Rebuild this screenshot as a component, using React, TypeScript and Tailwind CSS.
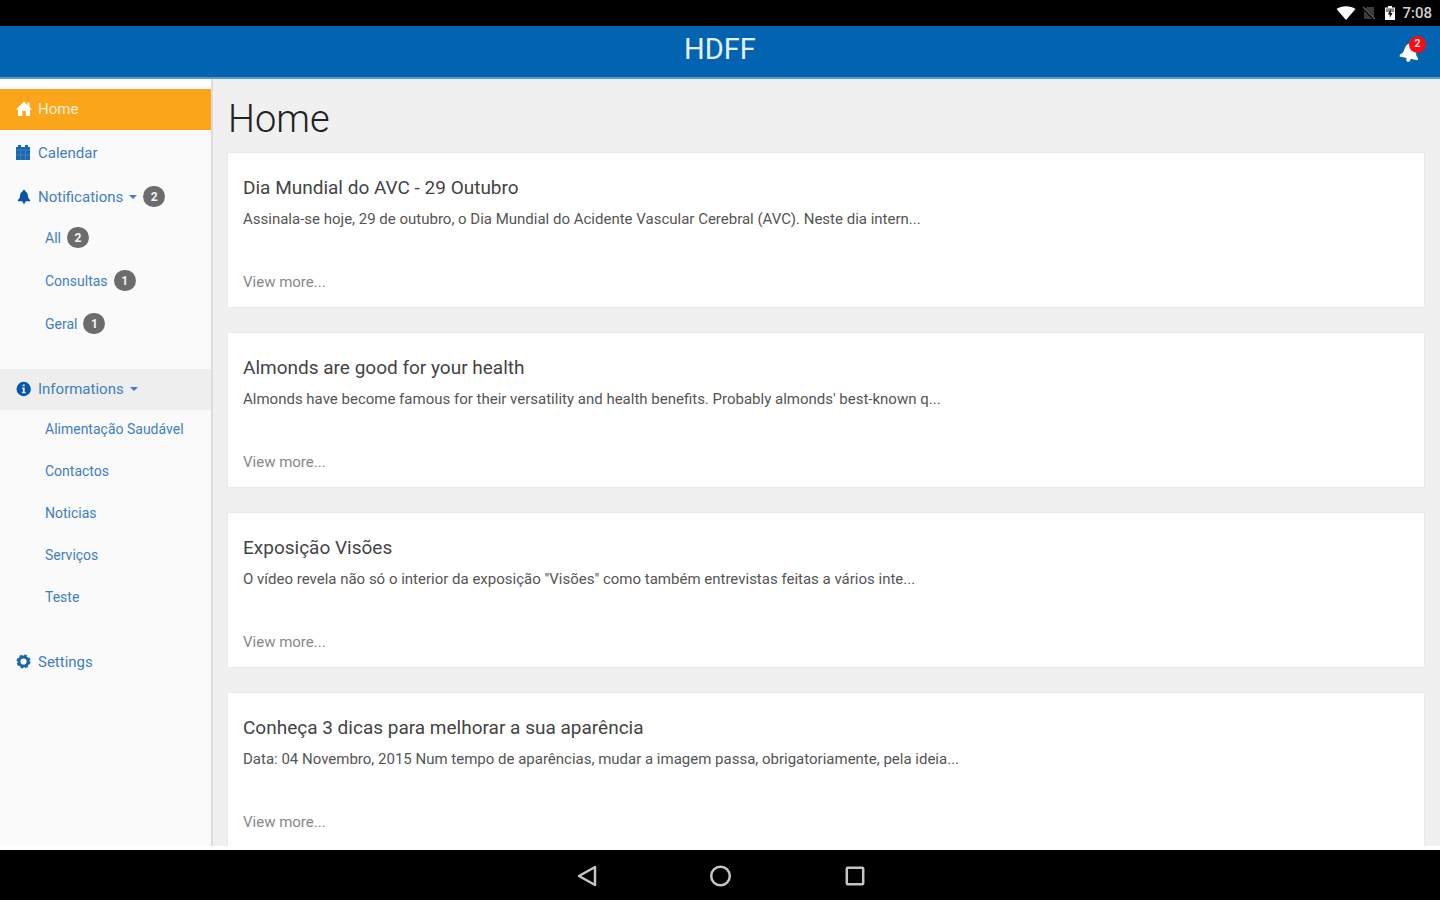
import React, { useState } from 'react';
import clsx from 'clsx';

interface SubItem {
  label: string;
  count?: number;
}

interface Article {
  title: string;
  excerpt: string;
}

const notificationItems: SubItem[] = [
  { label: 'All', count: 2 },
  { label: 'Consultas', count: 1 },
  { label: 'Geral', count: 1 },
];

const informationItems: SubItem[] = [
  { label: 'Alimentação Saudável' },
  { label: 'Contactos' },
  { label: 'Noticias' },
  { label: 'Serviços' },
  { label: 'Teste' },
];

const articles: Article[] = [
  {
    title: 'Dia Mundial do AVC - 29 Outubro',
    excerpt:
      'Assinala-se hoje, 29 de outubro, o Dia Mundial do Acidente Vascular Cerebral (AVC). Neste dia intern...',
  },
  {
    title: 'Almonds are good for your health',
    excerpt:
      "Almonds have become famous for their versatility and health benefits. Probably almonds' best-known q...",
  },
  {
    title: 'Exposição Visões',
    excerpt:
      'O vídeo revela não só o interior da exposição "Visões" como também entrevistas feitas a vários inte...',
  },
  {
    title: 'Conheça 3 dicas para melhorar a sua aparência',
    excerpt:
      'Data: 04 Novembro, 2015 Num tempo de aparências, mudar a imagem passa, obrigatoriamente, pela ideia...',
  },
];

function HomeIcon() {
  return (
    <svg viewBox="0 0 16 16" className="size-4 shrink-0" fill="currentColor" aria-hidden="true">
      <path d="M8 0.5 L16 8.5 H14 V15 H9.8 V10 H6.4 V15 H2 V8.5 H0 Z" />
      <path d="M11.5 1.5 H13.5 V6 H11.5 Z" />
    </svg>
  );
}

function CalendarIcon() {
  return (
    <svg viewBox="0 0 16 16" className="size-4 shrink-0" aria-hidden="true">
      <path d="M0 2 H14 V15 H0 Z" fill="#1b68b0" />
      <path d="M2 0 H5 V3 H2 Z M9 0 H12 V3 H9 Z" fill="#1b68b0" />
      <path d="M0 5 H14 M0 10 H14 M4.7 5 V15 M9.4 5 V15" stroke="#4d8cc4" strokeWidth="0.7" />
    </svg>
  );
}

function BellIcon({ className }: { className?: string }) {
  return (
    <svg viewBox="0 0 16 16" className={className} fill="currentColor" aria-hidden="true">
      <path d="M8 1 C9 1 9.4 1.7 9.4 2.5 C11.3 3.2 11.8 5 12 7 C12.2 9.2 13 10.2 14.2 11 V12.3 H1.8 V11 C3 10.2 3.8 9.2 4 7 C4.2 5 4.7 3.2 6.6 2.5 C6.6 1.7 7 1 8 1 Z" />
      <path d="M6.5 12 H9.5 C9.5 14 9 14.6 8 14.6 C7 14.6 6.5 14 6.5 12 Z" />
    </svg>
  );
}

function InfoIcon() {
  return (
    <svg viewBox="0 0 16 16" className="size-4 shrink-0" aria-hidden="true">
      <circle cx="7.7" cy="8" r="7.2" fill="#0b55a5" />
      <path d="M6.7 3.5 H8.7 V5.3 H6.7 Z M5.9 6.6 H8.7 V11 H9.7 V12.2 H5.9 V11 H6.8 V7.8 H5.9 Z" fill="#dbe8f5" />
    </svg>
  );
}

function GearIcon() {
  return (
    <svg viewBox="0 0 16 16" className="size-4 shrink-0" fill="none" stroke="#1b63ad" aria-hidden="true">
      <circle cx="7.5" cy="7.5" r="4.6" strokeWidth="3" />
      <circle cx="7.5" cy="7.5" r="6.3" strokeWidth="1.4" strokeDasharray="2.8 2.15" />
    </svg>
  );
}

function Caret() {
  return (
    <svg viewBox="0 0 8 4" className="ml-1.5 h-1 w-2" fill="currentColor" aria-hidden="true">
      <path d="M0 0 H8 L4 4 Z" />
    </svg>
  );
}

function Badge({ count }: { count: number }) {
  return (
    <span className="flex h-[21px] w-[22px] items-center justify-center rounded-full bg-[#6c6c6c] text-xs font-bold text-[#f4f4f4]">
      {count}
    </span>
  );
}

function SubMenu({ items }: { items: SubItem[] }) {
  return (
    <ul className="flex flex-col gap-[22px] pt-[9px] pb-8 pl-[45px]">
      {items.map((item) => (
        <li key={item.label}>
          <a href="#" className="flex items-center gap-1.5 text-sm leading-5">
            {item.label}
            {item.count !== undefined && <Badge count={item.count} />}
          </a>
        </li>
      ))}
    </ul>
  );
}

function StatusBar() {
  return (
    <div className="flex h-[26px] shrink-0 items-center justify-end bg-black pr-2 text-[#d0d0d0]">
      <svg viewBox="0 0 20 14" className="mr-1.5 h-3.5 w-5" fill="#fff" aria-hidden="true">
        <path d="M0.5 3 C6 -0.6 14 -0.6 19.5 3 L10 14 Z" />
      </svg>
      <svg viewBox="0 0 14 14" className="mr-2 size-3.5" aria-hidden="true">
        <path d="M5 1 H12 V13 H2 V4 Z" fill="#3c3c3c" />
        <path d="M1 2 L13 14" stroke="#000" strokeWidth="2.4" />
        <path d="M1 1 L13 13" stroke="#5c5c5c" strokeWidth="1.2" />
      </svg>
      <svg viewBox="0 0 12 14" className="mr-1.5 h-3.5 w-3" aria-hidden="true">
        <path d="M4 0 H8 V1.5 H11 V14 H1 V1.5 H4 Z" fill="#fff" />
        <path d="M1.8 2.3 H10.2 V6 H1.8 Z" fill="#8a8a8a" />
        <path d="M6.8 3 L3.8 8.4 H5.8 V12 L8.6 7 H6.8 Z" fill="#111" />
      </svg>
      <span className="text-[15px] leading-5 font-medium">7:08</span>
    </div>
  );
}

function Header() {
  return (
    <header className="relative flex h-[53px] shrink-0 items-center justify-center border-b-2 border-[#5e9bcb] bg-[#0263b0] pb-1.5">
      <span className="text-[29px] leading-9 text-[#e6f1fb]">HDFF</span>
      <button type="button" aria-label="Notifications" className="absolute top-2 right-3.5 h-8 w-7 text-white">
        <BellIcon className="absolute top-1.5 left-0 size-6 rotate-12" />
        <span className="absolute top-0.5 right-0 flex size-[17px] items-center justify-center rounded-full bg-[#fb0a12] text-[11px] font-bold text-[#ffd9d9]">
          2
        </span>
      </button>
    </header>
  );
}

function Sidebar() {
  const [showNotifications, setShowNotifications] = useState(true);
  const [showInformations, setShowInformations] = useState(true);
  const row = 'flex h-[41px] w-full items-center gap-1.5 pb-0.5 pl-4 text-[15px] leading-5';

  return (
    <nav className="w-[213px] shrink-0 border-r-2 border-[#dcdcdc] bg-[#fafafa] text-[#3f7fbd]">
      <div className="h-2.5 bg-white" />
      <ul className="flex flex-col gap-[3px]">
        <li>
          <a href="#" className={clsx(row, 'bg-[#faa51a] text-[#fff1d8]')}>
            <span className="text-white">
              <HomeIcon />
            </span>
            Home
          </a>
        </li>
        <li>
          <a href="#" className={row}>
            <CalendarIcon />
            Calendar
          </a>
        </li>
        <li>
          <button
            type="button"
            aria-expanded={showNotifications}
            className={row}
            onClick={() => setShowNotifications(!showNotifications)}
          >
            <BellIcon className="size-4 shrink-0 text-[#0b55a5]" />
            <span className="flex items-center">
              Notifications
              <Caret />
            </span>
            <Badge count={2} />
          </button>
          {showNotifications && <SubMenu items={notificationItems} />}
        </li>
        <li>
          <button
            type="button"
            aria-expanded={showInformations}
            className={clsx(row, 'bg-[#eeeeee]')}
            onClick={() => setShowInformations(!showInformations)}
          >
            <InfoIcon />
            <span className="flex items-center">
              Informations
              <Caret />
            </span>
          </button>
          {showInformations && <SubMenu items={informationItems} />}
        </li>
        <li>
          <a href="#" className={row}>
            <GearIcon />
            Settings
          </a>
        </li>
      </ul>
    </nav>
  );
}

function ArticleCard({ article }: { article: Article }) {
  return (
    <article className="bg-white px-[15px] pt-[23px] pb-[15px] shadow-[0_0_2px_#dddddd]">
      <h2 className="text-[19px] leading-6 text-[#444444]">{article.title}</h2>
      <p className="mt-[9px] text-[15px] leading-5 text-[#555555]">{article.excerpt}</p>
      <a href="#" className="mt-[43px] block w-fit text-[15px] leading-5 text-[#888888]">
        View more...
      </a>
    </article>
  );
}

function NavigationBar() {
  return (
    <div className="flex h-[50px] shrink-0 items-center justify-center gap-[110px] bg-black pt-0.5 text-[#c4c4c4]">
      <button type="button" aria-label="Back">
        <svg viewBox="0 0 24 24" className="size-6" fill="none" stroke="currentColor" strokeWidth="2.5">
          <path d="M21 3 V21 L5 12 Z" strokeLinejoin="round" />
        </svg>
      </button>
      <button type="button" aria-label="Home">
        <svg viewBox="0 0 24 24" className="size-6" fill="none" stroke="currentColor" strokeWidth="2.5">
          <circle cx="12.5" cy="12" r="9.3" />
        </svg>
      </button>
      <button type="button" aria-label="Recent apps">
        <svg viewBox="0 0 24 24" className="size-6" fill="none" stroke="currentColor" strokeWidth="2.5">
          <rect x="4.8" y="3.8" width="16.4" height="16.4" rx="1" />
        </svg>
      </button>
    </div>
  );
}

export default function App() {
  return (
    <div className="flex h-screen flex-col overflow-hidden bg-white font-['Roboto',sans-serif]">
      <StatusBar />
      <Header />
      <div className="mb-1 flex min-h-0 flex-1 overflow-hidden bg-[#f0f0f0]">
        <Sidebar />
        <main className="min-w-0 flex-1 overflow-hidden pt-5 pr-4 pl-[15px]">
          <h1 className="mb-3.5 text-[38px] leading-10 font-light text-[#222222]">Home</h1>
          <div className="flex flex-col gap-[26px]">
            {articles.map((article) => (
              <ArticleCard key={article.title} article={article} />
            ))}
          </div>
        </main>
      </div>
      <NavigationBar />
    </div>
  );
}
